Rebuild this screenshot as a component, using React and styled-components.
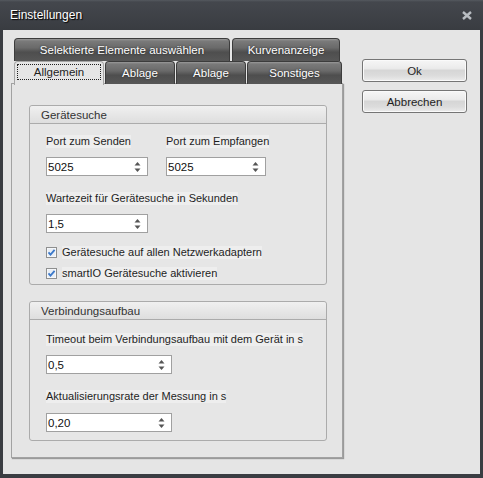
import React from "react";
import styled, { createGlobalStyle } from "styled-components";

const GlobalStyle = createGlobalStyle`
  html, body {
    margin: 0;
    padding: 0;
    background: #3b3e43;
  }
  * {
    box-sizing: border-box;
  }
`;

const font = `"Segoe UI", "Liberation Sans", Arial, sans-serif`;

const Window = styled.div`
  width: 483px;
  height: 478px;
  display: flex;
  flex-direction: column;
  background: #3a3d42;
  font-family: ${font};
  font-size: 11px;
  color: #1e1e1e;
  overflow: hidden;
`;

const TitleBar = styled.div`
  height: 30px;
  flex: none;
  display: flex;
  align-items: center;
  justify-content: space-between;
  padding: 0 11px 0 10px;
  background: linear-gradient(to bottom, #55595f 0, #44474d 2px, #393c41 100%);
  color: #ffffff;
  font-size: 12px;
  text-shadow: 1px 1px 1px #000;
`;

const CloseGlyph = styled.svg`
  width: 10px;
  height: 9px;
  margin-top: 1px;
`;

const Body = styled.div`
  flex: 1;
  margin: 0 3px 4px 3px;
  background: #e5e5e5;
  display: flex;
  padding: 8px 0 0 8px;
`;

const TabControl = styled.div`
  width: 332px;
  display: flex;
  flex-direction: column;
`;

const TabRow = styled.div`
  display: flex;
  gap: ${(p) => p.$gap}px;
  padding-left: 3px;
  height: 23px;
  position: relative;
  z-index: ${(p) => (p.$front ? 2 : 1)};
`;

const Tab = styled.div`
  width: ${(p) => p.$w}px;
  height: ${(p) => (p.$active ? 24 : 23)}px;
  display: flex;
  align-items: center;
  justify-content: center;
  border-radius: 4px 4px 0 0;
  font-size: 11.5px;
  ${(p) =>
    p.$active
      ? `
    background: #e5e5e5;
    border: 1px solid #a5a5a5;
    border-bottom: none;
    color: #1e1e1e;
    padding-bottom: 3px;
  `
      : `
    background: linear-gradient(to bottom, #9a9a9a 0, #7a7a7a 2px, #6a6a6a 40%, #4e4e4e 60%, #575757 100%);
    border: 1px solid #3c3c3c;
    border-bottom: none;
    color: #ffffff;
    text-shadow: 0 0 2px #222;
  `}
`;

const Focus = styled.span`
  border: 1px dotted #202020;
  padding: 1px 0;
  width: 84px;
  text-align: center;
`;

const Panel = styled.div`
  margin-top: -1px;
  height: 375px;
  background: #e5e5e5;
  border: 1px solid #a2a2a2;
  box-shadow: 1px 1px 1px #9a9a9a;
  padding: 21px 15px 0 17px;
  display: flex;
  flex-direction: column;
  gap: 16px;
`;

const Group = styled.div`
  height: ${(p) => p.$h}px;
  border: 1px solid #ababab;
  border-radius: 3px;
  background: #e6e6e6;
  display: flex;
  flex-direction: column;
`;

const GroupHeader = styled.div`
  height: 18px;
  flex: none;
  padding-left: 11px;
  display: flex;
  align-items: center;
  color: #333333;
  font-size: 11.5px;
  background: linear-gradient(to bottom, #f0f0f0, #dedede);
  border-bottom: 1px solid #ababab;
  border-radius: 3px 3px 0 0;
`;

const GroupBody = styled.div`
  padding: ${(p) => p.$top}px 0 0 16px;
  display: flex;
  flex-direction: column;
`;

const FieldRow = styled.div`
  display: flex;
  gap: 18px;
`;

const Field = styled.div`
  display: flex;
  flex-direction: column;
  align-items: flex-start;
  margin-bottom: ${(p) => p.$mb || 0}px;
`;

const Label = styled.span`
  height: 13px;
  line-height: 13px;
  background: #eeeeee;
  white-space: nowrap;
  margin-bottom: ${(p) => p.$gap || 9}px;
`;

const SpinBox = styled.div`
  width: ${(p) => p.$w}px;
  height: ${(p) => p.$h || 19}px;
  background: #ffffff;
  border: 1px solid #a0a0a0;
  display: flex;
  align-items: center;
  justify-content: space-between;
  padding: 0 6px 0 1px;
  color: #101010;
  font-size: 11.5px;
`;

const Arrows = styled.svg`
  width: 7px;
  height: 12px;
`;

const CheckRow = styled.label`
  display: flex;
  align-items: center;
  gap: 5px;
  height: 13px;
  margin-bottom: ${(p) => p.$mb || 0}px;
`;

const CheckText = styled.span`
  background: #eeeeee;
  line-height: 13px;
`;

const Box = styled.svg`
  width: 11px;
  height: 11px;
  flex: none;
`;

const Side = styled.div`
  margin-left: 19px;
  padding-top: 21px;
  display: flex;
  flex-direction: column;
  gap: 8px;
`;

const Button = styled.div`
  width: 105px;
  height: 23px;
  border: 1px solid #757575;
  border-radius: 3px;
  display: flex;
  align-items: center;
  justify-content: center;
  color: #1e1e1e;
  font-size: 11.5px;
  background: linear-gradient(
    to bottom,
    #f6f6f6 0,
    #ebebeb 40%,
    #d6d6d6 50%,
    #dcdcdc 75%,
    #ececec 100%
  );
  box-shadow: inset 0 0 0 1px #fafafa;
`;

function Spin({ value, w }) {
  return (
    <SpinBox $w={w}>
      <span>{value}</span>
      <Arrows viewBox="0 0 7 12">
        <path d="M3.5 1 L6.5 4.5 L0.5 4.5 Z" fill="#555" />
        <path d="M0.5 7.5 L6.5 7.5 L3.5 11 Z" fill="#555" />
      </Arrows>
    </SpinBox>
  );
}

function Check({ children, mb }) {
  return (
    <CheckRow $mb={mb}>
      <Box viewBox="0 0 11 11">
        <rect x="0.5" y="0.5" width="10" height="10" fill="#ffffff" stroke="#8e8f8f" />
        <rect x="1.5" y="1.5" width="8" height="8" fill="#e9eef4" />
        <path d="M2.5 5.3 L4.5 7.6 L8.6 2.8" fill="none" stroke="#3b78c9" strokeWidth="1.8" />
      </Box>
      <CheckText>{children}</CheckText>
    </CheckRow>
  );
}

export default function App() {
  return (
    <>
      <GlobalStyle />
      <Window>
        <TitleBar>
          <span>Einstellungen</span>
          <CloseGlyph viewBox="0 0 10 9">
            <path d="M1 1 L9 8 M9 1 L1 8" stroke="#b9bdc2" strokeWidth="2.4" />
          </CloseGlyph>
        </TitleBar>
        <Body>
          <TabControl>
            <TabRow $gap={2}>
              <Tab $w={216}>Selektierte Elemente auswählen</Tab>
              <Tab $w={108}>Kurvenanzeige</Tab>
            </TabRow>
            <TabRow $gap={1} $front>
              <Tab $w={90} $active>
                <Focus>Allgemein</Focus>
              </Tab>
              <Tab $w={70}>Ablage</Tab>
              <Tab $w={70}>Ablage</Tab>
              <Tab $w={95}>Sonstiges</Tab>
            </TabRow>
            <Panel>
              <Group $h={180}>
                <GroupHeader>Gerätesuche</GroupHeader>
                <GroupBody $top={11}>
                  <FieldRow>
                    <Field $mb={16}>
                      <Label>Port zum Senden</Label>
                      <Spin value="5025" w={102} />
                    </Field>
                    <Field $mb={16}>
                      <Label>Port zum Empfangen</Label>
                      <Spin value="5025" w={100} />
                    </Field>
                  </FieldRow>
                  <Field $mb={13}>
                    <Label>Wartezeit für Gerätesuche in Sekunden</Label>
                    <Spin value="1,5" w={102} />
                  </Field>
                  <Check mb={8}>Gerätesuche auf allen Netzwerkadaptern</Check>
                  <Check>smartIO Gerätesuche aktivieren</Check>
                </GroupBody>
              </Group>
              <Group $h={140}>
                <GroupHeader>Verbindungsaufbau</GroupHeader>
                <GroupBody $top={13}>
                  <Field $mb={16}>
                    <Label>Timeout beim Verbindungsaufbau mit dem Gerät in s</Label>
                    <Spin value="0,5" w={126} />
                  </Field>
                  <Field>
                    <Label $gap={10}>Aktualisierungsrate der Messung in s</Label>
                    <Spin value="0,20" w={126} />
                  </Field>
                </GroupBody>
              </Group>
            </Panel>
          </TabControl>
          <Side>
            <Button>Ok</Button>
            <Button>Abbrechen</Button>
          </Side>
        </Body>
      </Window>
    </>
  );
}
